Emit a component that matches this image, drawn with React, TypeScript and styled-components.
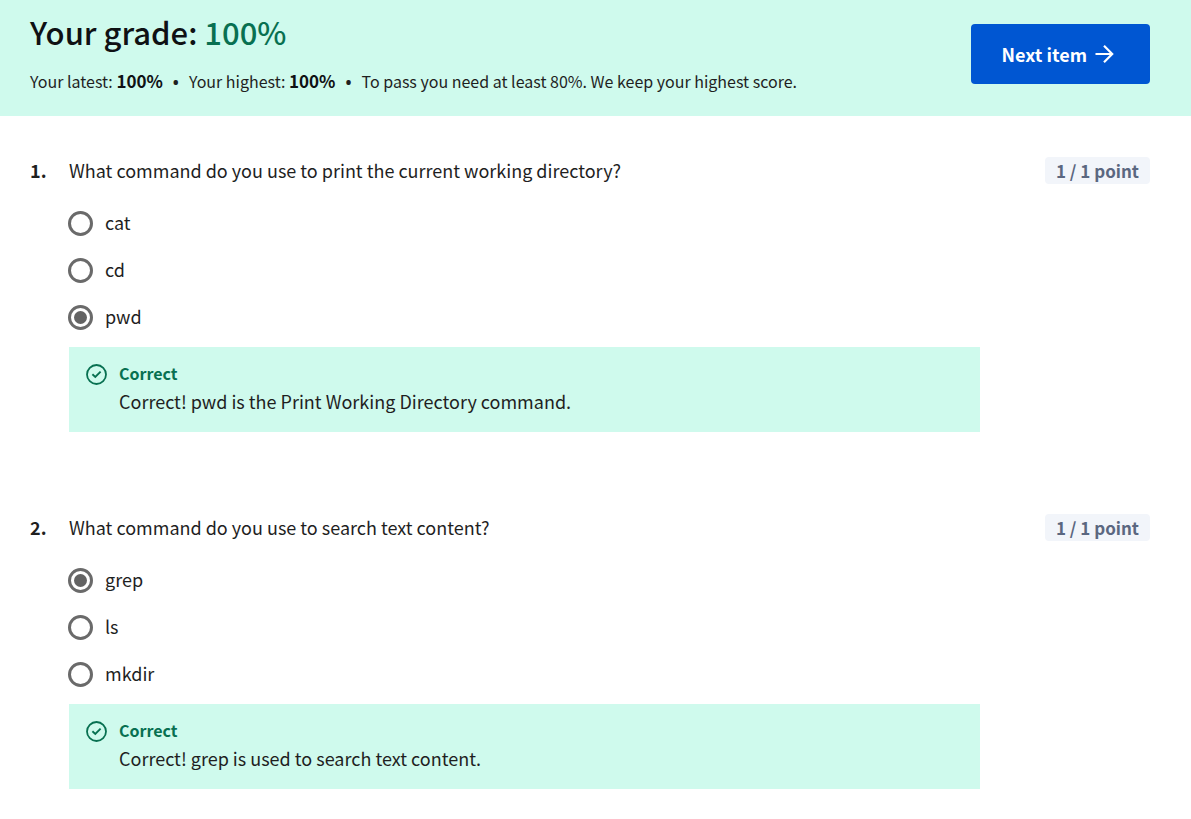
import React from "react";
import styled, { createGlobalStyle } from "styled-components";

const GlobalStyle = createGlobalStyle`
  *, *::before, *::after { box-sizing: border-box; }
  body {
    margin: 0;
    background: #fff;
    color: #1f1f1f;
    font-family: "Noto Sans CJK SC", "Noto Sans", sans-serif;
    font-size: 18px;
    line-height: 28px;
  }
`;

const Header = styled.header`
  display: flex;
  justify-content: space-between;
  align-items: flex-start;
  gap: 24px;
  padding: 10px 41px 21px 30px;
  background: #cffaed;
`;

const Title = styled.h1`
  margin: 0;
  font-size: 31px;
  line-height: 44px;
  font-weight: 500;
  color: #0f1114;
`;

const Grade = styled.span`
  color: #087051;
`;

const Summary = styled.p`
  margin: 13px 0 0;
  font-size: 16px;
  line-height: 28px;
`;

const Score = styled.strong`
  font-size: 17px;
  line-height: 20px;
  font-weight: 700;
  color: #0f1114;
`;

const Dot = styled.span`
  margin: 0 10px;
  font-family: "Noto Sans", sans-serif;
  font-weight: 700;
  line-height: 20px;
`;

const NextButton = styled.button`
  display: flex;
  align-items: center;
  justify-content: center;
  gap: 6px;
  flex: none;
  height: 60px;
  margin-top: 14px;
  padding: 0 35px 0 31px;
  border: 0;
  border-radius: 4px;
  background: #0056d2;
  color: #fff;
  font: inherit;
  font-weight: 700;
  cursor: pointer;
`;

const Quiz = styled.main`
  display: flex;
  flex-direction: column;
  gap: 82px;
  padding: 41px 41px 30px 30px;
`;

const QuestionRow = styled.section`
  display: grid;
  grid-template-columns: 39px minmax(0, 1fr) 170px;
  align-items: start;
`;

const QuestionNumber = styled.span`
  font-weight: 700;
  line-height: 26px;
`;

const Choices = styled.fieldset`
  min-width: 0;
  margin: 0;
  padding: 0;
  border: 0;
`;

const Prompt = styled.legend`
  margin: 0 0 17px;
  padding: 0;
  line-height: 26px;
`;

const Option = styled.label`
  display: flex;
  align-items: center;
  gap: 12px;
  height: 47px;
  cursor: pointer;
`;

const OptionText = styled.span`
  padding-bottom: 3px;
`;

const Radio = styled.input`
  appearance: none;
  display: grid;
  place-items: center;
  flex: none;
  width: 25px;
  height: 25px;
  margin: 0 0 0 -1px;
  border: 3px solid #6a6a6a;
  border-radius: 50%;

  &:checked::before {
    content: "";
    width: 13px;
    height: 13px;
    border-radius: 50%;
    background: #636363;
  }
`;

const Points = styled.span`
  justify-self: end;
  padding: 0 11px;
  border-radius: 4px;
  background: #f2f5fa;
  color: #5b6780;
  font-size: 17px;
  font-weight: 700;
  line-height: 27px;
`;

const Feedback = styled.div`
  display: flex;
  gap: 12px;
  margin-top: 6px;
  padding: 12px 17px 17px;
  background: #cffaed;
`;

const FeedbackIcon = styled.svg`
  flex: none;
  width: 21px;
  height: 21px;
  margin-top: 5px;
`;

const Verdict = styled.div`
  color: #087051;
  font-size: 16px;
  font-weight: 700;
`;

interface Question {
  prompt: string;
  options: string[];
  answer: string;
  feedback: string;
}

const questions: Question[] = [
  {
    prompt: "What command do you use to print the current working directory?",
    options: ["cat", "cd", "pwd"],
    answer: "pwd",
    feedback: "Correct! pwd is the Print Working Directory command.",
  },
  {
    prompt: "What command do you use to search text content?",
    options: ["grep", "ls", "mkdir"],
    answer: "grep",
    feedback: "Correct! grep is used to search text content.",
  },
];

function CheckIcon() {
  return (
    <FeedbackIcon viewBox="0 0 21 21" fill="none" stroke="#087051" aria-hidden="true">
      <circle cx="10.5" cy="10.5" r="9.5" strokeWidth="1.8" />
      <path d="M6.4 10.3l2.9 2.7 5.3-5.3" strokeWidth="1.9" />
    </FeedbackIcon>
  );
}

function ArrowIcon() {
  return (
    <svg width="22" height="22" viewBox="0 0 22 22" fill="none" stroke="#fff" strokeWidth="2.2" aria-hidden="true">
      <path d="M2.5 11h17M11 2.8l8.2 8.2-8.2 8.2" />
    </svg>
  );
}

export default function App() {
  return (
    <>
      <GlobalStyle />
      <Header>
        <div>
          <Title>
            Your grade: <Grade>100%</Grade>
          </Title>
          <Summary>
            Your latest: <Score>100%</Score>
            <Dot>•</Dot>
            Your highest: <Score>100%</Score>
            <Dot>•</Dot>
            To pass you need at least 80%. We keep your highest score.
          </Summary>
        </div>
        <NextButton type="button">
          Next item
          <ArrowIcon />
        </NextButton>
      </Header>
      <Quiz>
        {questions.map((q, i) => (
          <QuestionRow key={q.prompt}>
            <QuestionNumber>{i + 1}.</QuestionNumber>
            <Choices>
              <Prompt>{q.prompt}</Prompt>
              {q.options.map((option) => (
                <Option key={option}>
                  <Radio type="radio" name={`question-${i + 1}`} value={option} defaultChecked={option === q.answer} />
                  <OptionText>{option}</OptionText>
                </Option>
              ))}
              <Feedback>
                <CheckIcon />
                <div>
                  <Verdict>Correct</Verdict>
                  <div>{q.feedback}</div>
                </div>
              </Feedback>
            </Choices>
            <Points>1 / 1 point</Points>
          </QuestionRow>
        ))}
      </Quiz>
    </>
  );
}
